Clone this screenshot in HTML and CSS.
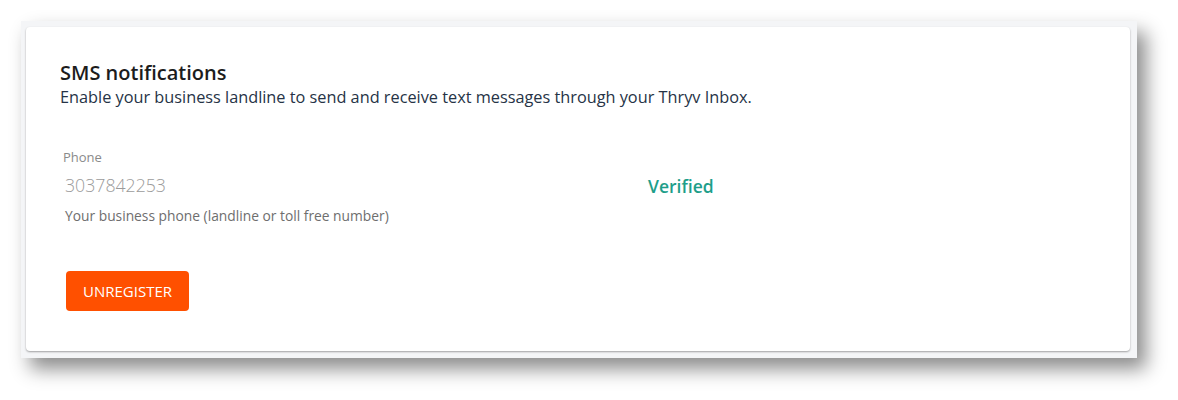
FILE: index.html
```html
<!DOCTYPE html>
<html lang="en">
<head>
  <meta charset="UTF-8">
  <meta name="viewport" content="width=device-width, initial-scale=1.0">
  <title>SMS notifications</title>
  <link rel="stylesheet" href="styles.css">
</head>
<body>
  <div class="frame">
    <div class="card">
      <h2 class="title">SMS notifications</h2>
      <p class="subtitle">Enable your business landline to send and receive text messages through your Thryv Inbox.</p>

      <div class="phone-row">
        <div class="field">
          <label class="field-label">Phone</label>
          <div class="field-value">3037842253</div>
          <div class="field-help">Your business phone (landline or toll free number)</div>
        </div>
        <div class="status">Verified</div>
      </div>

      <button type="button" class="btn-unregister">UNREGISTER</button>
    </div>
  </div>
</body>
</html>
```

FILE: styles.css
```css
body {
  font-family: "Open Sans", Arial, sans-serif;
  background-color: #ffffff;
  margin: 0;
  min-height: 400px;
}
.frame {
  margin: 21px 0 0 21px;
  width: 1116px;
  height: 337px;
  box-sizing: border-box;
  padding: 6px 7px 7px 5px;
  background-color: #f4f5f7;
  box-shadow: 9px 11px 18px rgba(0, 0, 0, 0.45);
}
.card {
  height: 100%;
  box-sizing: border-box;
  background-color: white;
  border-radius: 4px;
  box-shadow: 0 1px 2px rgba(0, 0, 0, 0.35);
  padding: 33px 34px 0 34px;
}
.title {
  margin: 0;
  font-size: 20px;
  font-weight: 600;
  line-height: 26px;
  color: #1c1c1c;
}
.subtitle {
  margin: 0;
  font-size: 16.3px;
  line-height: 22px;
  color: #263346;
}
.phone-row {
  display: flex;
  align-items: flex-start;
  margin-top: 41px;
  padding-left: 3px;
}
.field {
  width: 585px;
}
.field-label {
  display: block;
  font-size: 13px;
  line-height: 16px;
  color: #8a8a8a;
}
.field-value {
  margin-top: 7px;
  padding-left: 2px;
  font-size: 17.7px;
  font-weight: 300;
  line-height: 26px;
  color: #9b9b9b;
}
.field-help {
  margin-top: 8px;
  padding-left: 2px;
  font-size: 13.8px;
  line-height: 20px;
  color: #6e6e6e;
}
.status {
  margin-top: 24px;
  font-size: 17.5px;
  font-weight: 600;
  line-height: 26px;
  color: #1e9e8a;
}
.btn-unregister {
  margin: 45px 0 0 6px;
  width: 123px;
  height: 40px;
  background-color: #ff5000;
  color: white;
  font-family: "Open Sans", Arial, sans-serif;
  font-size: 15px;
  font-weight: 500;
  border: none;
  border-radius: 4px;
  cursor: pointer;
}
```
